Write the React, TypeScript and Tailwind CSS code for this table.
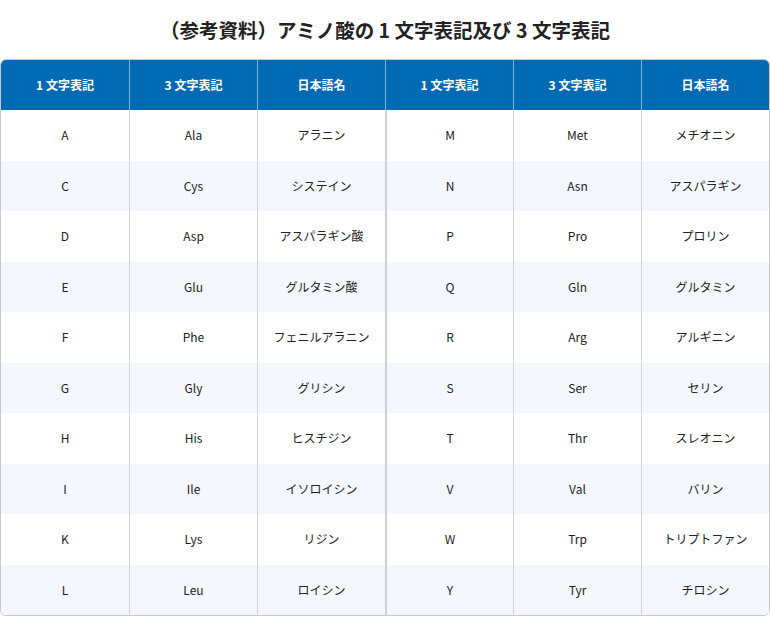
const rows = [
  ['A', 'Ala', 'アラニン', 'M', 'Met', 'メチオニン'],
  ['C', 'Cys', 'システイン', 'N', 'Asn', 'アスパラギン'],
  ['D', 'Asp', 'アスパラギン酸', 'P', 'Pro', 'プロリン'],
  ['E', 'Glu', 'グルタミン酸', 'Q', 'Gln', 'グルタミン'],
  ['F', 'Phe', 'フェニルアラニン', 'R', 'Arg', 'アルギニン'],
  ['G', 'Gly', 'グリシン', 'S', 'Ser', 'セリン'],
  ['H', 'His', 'ヒスチジン', 'T', 'Thr', 'スレオニン'],
  ['I', 'Ile', 'イソロイシン', 'V', 'Val', 'バリン'],
  ['K', 'Lys', 'リジン', 'W', 'Trp', 'トリプトファン'],
  ['L', 'Leu', 'ロイシン', 'Y', 'Tyr', 'チロシン'],
]

const headers = ['1 文字表記', '3 文字表記', '日本語名', '1 文字表記', '3 文字表記', '日本語名']

export default function App() {
  return (
    <div className="w-[770px] h-[617px] bg-white text-[#222] font-['Noto_Sans_CJK_JP',sans-serif]">
      <h1 className="h-[59px] pt-[17px] text-center text-[19.5px] leading-[26px] font-bold">
        （参考資料）アミノ酸の 1 文字表記及び 3 文字表記
      </h1>
      <div className="border border-[#c8c8c8] rounded-[6px] overflow-hidden">
        <div className="grid grid-cols-6 h-[50px] bg-[#006ab4] text-white text-[12px] font-bold">
          {headers.map((h, i) => (
            <div
              key={i}
              className={`flex items-center justify-center ${i > 0 ? 'border-l border-[#7fb0d8]' : ''}`}
            >
              {h}
            </div>
          ))}
        </div>
        {rows.map((r, ri) => (
          <div
            key={ri}
            className={`grid grid-cols-6 h-[50.5px] text-[12px] ${ri % 2 === 1 ? 'bg-[#f5f7fe]' : 'bg-white'}`}
          >
            {r.map((c, ci) => (
              <div
                key={ci}
                className={`flex items-center justify-center ${
                  ci === 3 ? 'border-l-2 border-[#d0d0d4]' : ci > 0 ? 'border-l border-[#d4d4d8]' : ''
                }`}
              >
                {c}
              </div>
            ))}
          </div>
        ))}
      </div>
    </div>
  )
}
